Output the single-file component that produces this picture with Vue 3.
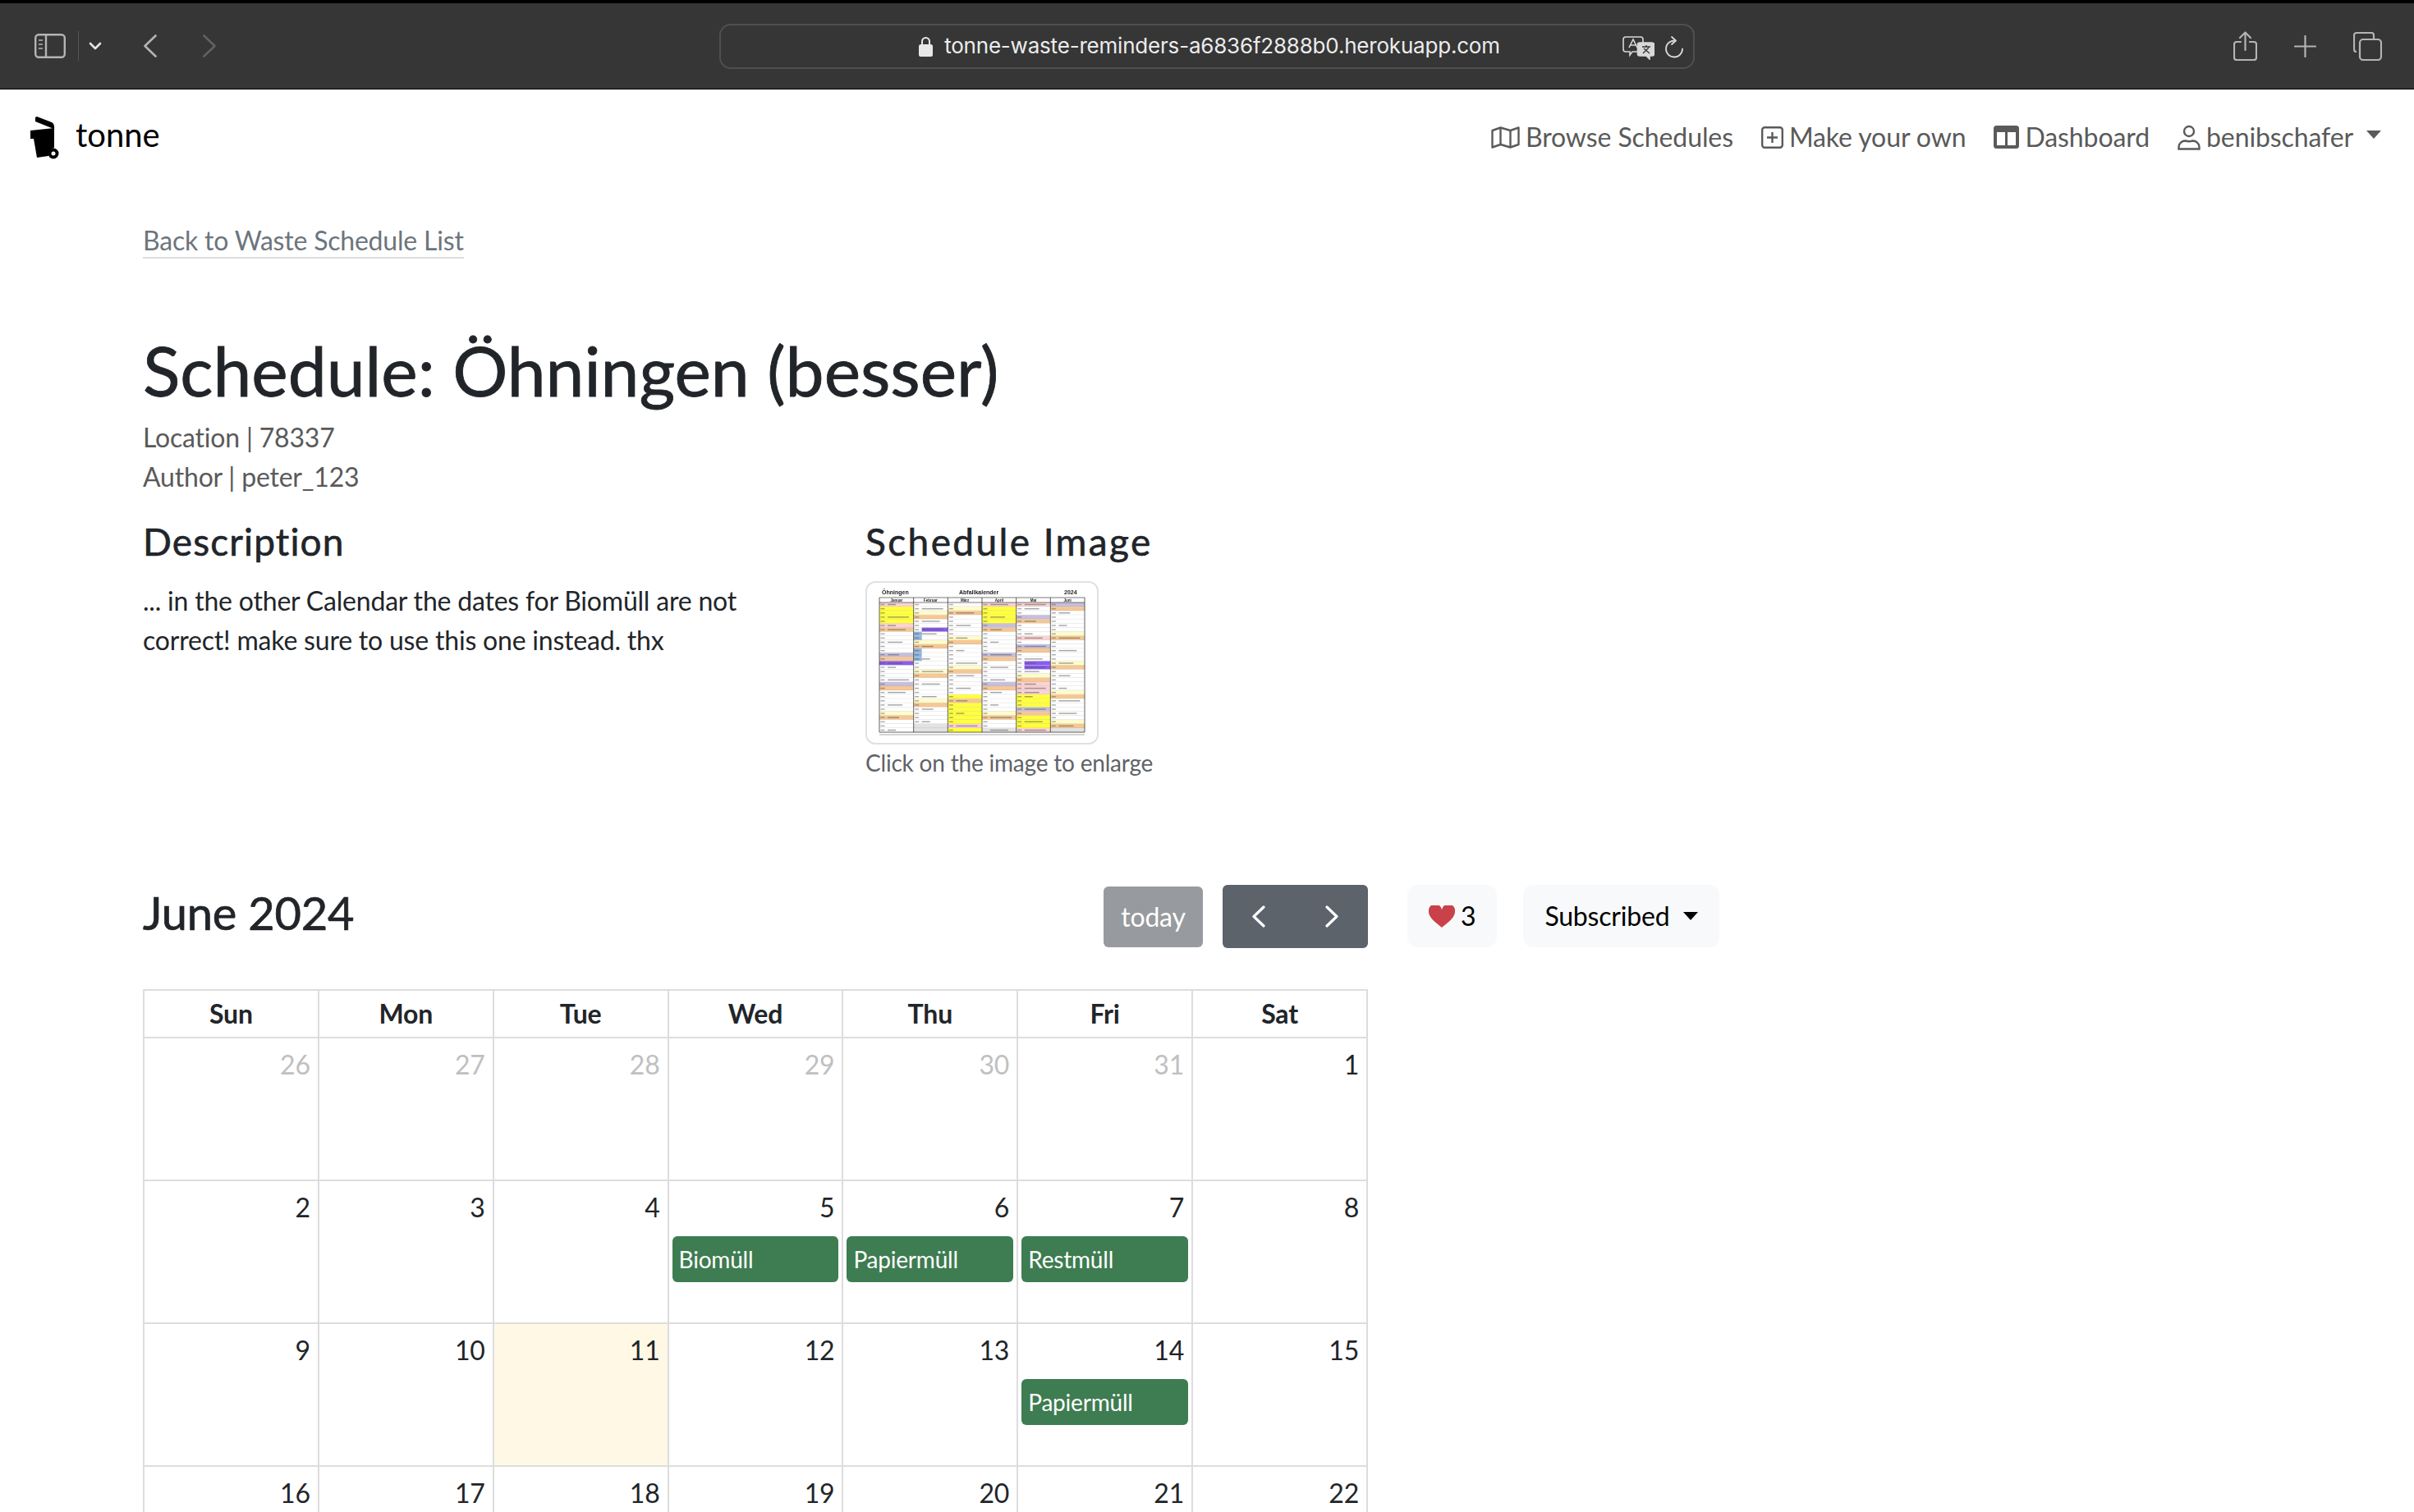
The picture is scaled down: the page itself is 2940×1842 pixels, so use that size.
<script setup>
const weekdays = ['Sun', 'Mon', 'Tue', 'Wed', 'Thu', 'Fri', 'Sat']

const weeks = [
  [26, 27, 28, 29, 30, 31, 1],
  [2, 3, 4, 5, 6, 7, 8],
  [9, 10, 11, 12, 13, 14, 15],
  [16, 17, 18, 19, 20, 21, 22]
]

const events = { 5: 'Biomüll', 6: 'Papiermüll', 7: 'Restmüll', 14: 'Papiermüll' }

function isMuted(weekIndex, day) {
  return weekIndex === 0 && day > 7
}

// thumbnail of the printed calendar, one letter per day
const palette = {
  r: '#fbd3d3', y: '#ffff3c', o: '#f6c794', l: '#fffccb', p: '#c6bfdc',
  v: '#8a5cf2', w: '#ffffff', g: '#e2e2e2', b: '#ffffff', h: '#ffffff'
}
const months = [
  { name: 'Januar', days: 'ryyyyrowwwwwpovwwwwpowwwwwloWWW' },
  { name: 'Februar', days: 'wwlowwhbblobbbwwlowwwwwlowwwwgg' },
  { name: 'März', days: 'wlowwwwwlowwwwwlowwwwwyoyyyyyryo' },
  { name: 'April', days: 'ryyyypowwwwwpowwwwwpowwwwwlowwg' },
  { name: 'Mai', days: 'rwwpowwwrwpowwhhwlorrryyypoyyyry' },
  { name: 'Juni', days: 'powwwwwlowwwwwlowwwwwlowwwwwlog' }
]
const rowH = 5.1
const colW = 41.67
const cells = []
months.forEach((month, m) => {
  month.days.toLowerCase().slice(0, 31).split('').forEach((kind, d) => {
    const mark = (d * 7 + m * 5) % 3 === 0 || kind === 'r' || kind === 'v' || kind === 'h'
    cells.push({
      key: m + '-' + d,
      kind,
      x: 15 + m * colW,
      y: 24 + d * rowH,
      mark: kind !== 'g',
      label: mark ? 10 + ((d * 3 + m) % 5) * 4 : 0
    })
  })
})
</script>

<template>
  <div class="page">
    <header class="browser-bar">
      <div class="browser-left">
        <svg class="ic-sidebar" width="38" height="30" viewBox="0 0 38 30" fill="none" stroke="#b4b4b4" stroke-width="2.4">
          <rect x="1.2" y="1.2" width="35.6" height="27.6" rx="4" />
          <path d="M14 1v28" />
          <path d="M5 8h5M5 13h5M5 18h5" stroke-width="1.6" />
        </svg>
        <span class="bar-divider"></span>
        <svg width="16" height="10" viewBox="0 0 16 10" fill="none" stroke="#e4e4e4" stroke-width="2.6" stroke-linecap="round" stroke-linejoin="round">
          <path d="M2 2l6 6 6-6" />
        </svg>
        <svg class="ic-back" width="16" height="28" viewBox="0 0 16 28" fill="none" stroke="#b4b4b4" stroke-width="2.6" stroke-linecap="round" stroke-linejoin="round">
          <path d="M14.5 1.5L1.5 14l13 12.5" />
        </svg>
        <svg class="ic-forward" width="16" height="28" viewBox="0 0 16 28" fill="none" stroke="#626262" stroke-width="2.6" stroke-linecap="round" stroke-linejoin="round">
          <path d="M1.5 1.5L14.5 14l-13 12.5" />
        </svg>
      </div>
      <div class="url-box">
        <svg class="ic-lock" width="17" height="25" viewBox="0 0 17 25">
          <path d="M4 11V6.5a4.5 4.5 0 0 1 9 0V11" fill="none" stroke="#e8e8e8" stroke-width="2" />
          <rect x="0" y="10" width="17" height="15" rx="2.5" fill="#e8e8e8" />
        </svg>
        <span class="url-text">tonne-waste-reminders-a6836f2888b0.herokuapp.com</span>
        <svg class="ic-translate" width="39" height="29" viewBox="0 0 39 29" fill="none" stroke="#d8d8d8" stroke-width="1.6">
          <path d="M4 1h18a3 3 0 0 1 3 3v12a3 3 0 0 1-3 3h-10l-3 4v-4H4a3 3 0 0 1-3-3V4a3 3 0 0 1 3-3z" />
          <path d="M8 14l5-10 5 10M10 11h6" />
          <path d="M21 8h15a2.5 2.5 0 0 1 2.5 2.5v11A2.5 2.5 0 0 1 36 24h-3v4l-4-4h-8a2.5 2.5 0 0 1-2.5-2.5v-11A2.5 2.5 0 0 1 21 8z" fill="#d8d8d8" />
          <path d="M24 13h10M29 11v2M25 21l7-7M26 15l7 6" stroke="#363636" stroke-width="1.4" />
        </svg>
        <svg class="ic-reload" width="23" height="27" viewBox="0 0 23 27" fill="none" stroke="#d8d8d8" stroke-width="1.8" stroke-linecap="round" stroke-linejoin="round">
          <path d="M11 5.5a10 10 0 1 0 10 10" />
          <path d="M8 1l5 4.5L8 10" />
        </svg>
      </div>
      <div class="browser-right">
        <svg width="29" height="36" viewBox="0 0 29 36" fill="none" stroke="#b4b4b4" stroke-width="2.2" stroke-linecap="round" stroke-linejoin="round">
          <path d="M9 13H4a3 3 0 0 0-3 3v16a3 3 0 0 0 3 3h21a3 3 0 0 0 3-3V16a3 3 0 0 0-3-3h-5" />
          <path d="M14.5 23V2M8 8l6.5-6.5L21 8" />
        </svg>
        <svg width="27" height="27" viewBox="0 0 27 27" stroke="#b4b4b4" stroke-width="2.2" stroke-linecap="round">
          <path d="M13.5 1v25M1 13.5h25" />
        </svg>
        <svg width="35" height="35" viewBox="0 0 35 35" fill="none" stroke="#b4b4b4" stroke-width="2.2">
          <path d="M4 24a3 3 0 0 1-3-3V4a3 3 0 0 1 3-3h18a3 3 0 0 1 3 3v5" />
          <rect x="8" y="9" width="26" height="25" rx="4" />
        </svg>
      </div>
    </header>

    <nav class="top-nav">
      <a class="brand">
        <svg class="brand-logo" width="60" height="60" viewBox="0 0 60 60">
          <path d="M13 4l2-1 18 7c3 1.500 3.500 5 3 10l-3-3L13 9z" fill="#000" />
          <path d="M7 20l29-3v24c-4 1-7 5-7 10l-14 2-4-23-4 0z" fill="#000" />
          <circle cx="35" cy="48" r="6.500" fill="#000" />
          <circle cx="35" cy="48" r="2.500" fill="#fff" />
        </svg>
        <span class="brand-name">tonne</span>
      </a>
      <div class="nav-links">
        <a class="nav-link">
          <svg width="35" height="27" viewBox="0 0 35 27" fill="none" stroke="#5a5a5a" stroke-width="2.4" stroke-linejoin="round">
            <path d="M1.500 5L11.500 1.500 23.500 5 33.500 1.500V22L23.500 25.500 11.500 22 1.500 25.500z" />
            <path d="M11.500 1.500V22M23.500 5V25.500" />
          </svg>
          Browse Schedules
        </a>
        <a class="nav-link">
          <svg width="27" height="27" viewBox="0 0 27 27" fill="none" stroke="#5a5a5a" stroke-width="2.4">
            <rect x="1.200" y="1.200" width="24.600" height="24.600" rx="3" />
            <path d="M13.500 7v13M7 13.500h13" />
          </svg>
          Make your own
        </a>
        <a class="nav-link">
          <svg width="31" height="28" viewBox="0 0 31 28">
            <rect width="31" height="28" rx="3.500" fill="#5a5a5a" />
            <rect x="4" y="8" width="10" height="16" fill="#fff" />
            <rect x="17" y="8" width="10" height="16" fill="#fff" />
          </svg>
          Dashboard
        </a>
        <a class="nav-link user-link">
          <svg width="28" height="31" viewBox="0 0 28 31" fill="none" stroke="#5a5a5a" stroke-width="2.400">
            <circle cx="14" cy="8" r="6" />
            <path d="M1.500 29.500v-2c0-5 4-8 8-8 3 1 6 1 9 0 4 0 8 3 8 8v2z" />
          </svg>
          benibschafer
          <span class="caret nav-caret"></span>
        </a>
      </div>
    </nav>

    <main class="content">
      <a class="back-link">Back to Waste Schedule List</a>

      <h1 class="title">Schedule: Öhningen (besser)</h1>
      <p class="meta">Location | 78337</p>
      <p class="meta">Author | peter_123</p>

      <section class="info-row">
        <div class="info-col">
          <h3 class="heading-desc">Description</h3>
          <p class="description">... in the other Calendar the dates for Biomüll are not correct! make sure to use this one instead. thx</p>
        </div>
        <div class="info-col">
          <h3 class="heading-image">Schedule Image</h3>
          <div class="thumb">
            <svg width="280" height="195" viewBox="0 0 280 195">
              <defs>
                <filter id="soft"><feGaussianBlur stdDeviation="0.4" /></filter>
              </defs>
              <g filter="url(#soft)">
                <g v-for="cell in cells" :key="cell.key">
                  <rect :x="cell.x" :y="cell.y" :width="colW" :height="rowH" :fill="palette[cell.kind]" />
                  <rect v-if="cell.kind === 'b'" :x="cell.x" :y="cell.y" width="10" :height="rowH" fill="#8fb4de" />
                  <rect v-if="cell.kind === 'h'" :x="cell.x + 10" :y="cell.y" :width="colW - 10" :height="rowH" fill="#8a5cf2" />
                  <rect v-if="cell.mark" :x="cell.x + 1.500" :y="cell.y + 1.800" width="5" height="1.400" fill="#555" opacity="0.5" />
                  <rect v-if="cell.label" :x="cell.x + 10" :y="cell.y + 1.800" :width="cell.label" height="1.400" fill="#555" opacity="0.55" />
                  <path :d="`M${cell.x} ${cell.y + rowH}h${colW}`" stroke="#888" stroke-width="0.3" />
                </g>
                <path v-for="i in 7" :key="i" :d="`M${15 + (i - 1) * colW} 18V182`" stroke="#222" stroke-width="0.7" />
                <path d="M15 18H265M15 24H265M15 182H265" stroke="#222" stroke-width="0.6" />
                <path d="M15 185H265" stroke="#aaa" stroke-width="1.200" />
                <text x="18" y="14" class="thumb-head">Öhningen</text>
                <text x="112" y="14" class="thumb-head">Abfallkalender</text>
                <text x="240" y="14" class="thumb-head">2024</text>
                <text v-for="(month, i) in months" :key="month.name" :x="15 + (i + 0.5) * colW" y="23" text-anchor="middle" class="thumb-month">{{ month.name }}</text>
              </g>
            </svg>
          </div>
          <p class="thumb-caption">Click on the image to enlarge</p>
        </div>
      </section>

      <section class="calendar-row">
        <div class="calendar">
          <div class="cal-toolbar">
            <h2>June 2024</h2>
            <div class="cal-buttons">
              <button class="btn-today">today</button>
              <div class="btn-group">
                <button class="btn-arrow">
                  <svg width="16" height="27" viewBox="0 0 16 27" fill="none" stroke="#fff" stroke-width="3.200" stroke-linecap="round" stroke-linejoin="round">
                    <path d="M14 2L2 13.500 14 25" />
                  </svg>
                </button>
                <button class="btn-arrow">
                  <svg width="16" height="27" viewBox="0 0 16 27" fill="none" stroke="#fff" stroke-width="3.200" stroke-linecap="round" stroke-linejoin="round">
                    <path d="M2 2l12 11.500L2 25" />
                  </svg>
                </button>
              </div>
            </div>
          </div>
          <table class="cal-table">
            <thead>
              <tr>
                <th v-for="day in weekdays" :key="day">{{ day }}</th>
              </tr>
            </thead>
            <tbody>
              <tr v-for="(week, w) in weeks" :key="w">
                <td v-for="day in week" :key="day" :class="{ today: w === 2 && day === 11 }">
                  <div class="day-num" :class="{ muted: isMuted(w, day) }">{{ day }}</div>
                  <div v-if="events[day] && !isMuted(w, day)" class="event">{{ events[day] }}</div>
                </td>
              </tr>
            </tbody>
          </table>
        </div>
        <div class="cal-actions">
          <button class="btn-light">
            <svg width="32" height="27" viewBox="0 0 32 27">
              <path d="M16 27C9 21 0 15 0 8a8 8 0 0 1 16-3 8 8 0 0 1 16 3c0 7-9 13-16 19z" fill="#c9424a" />
            </svg>
            3
          </button>
          <button class="btn-light btn-sub">Subscribed <span class="caret"></span></button>
        </div>
      </section>
    </main>
  </div>
</template>

<style>
html, body {
  margin: 0;
  background: #fff;
}
</style>

<style scoped>
.page {
  width: 2940px;
  height: 1842px;
  overflow: hidden;
  font-family: "Lato", "Liberation Sans", sans-serif;
  font-size: 32px;
  line-height: 48px;
  letter-spacing: -0.2px;
  color: #212529;
}

.browser-bar {
  display: grid;
  grid-template-columns: 876px 1188px 1fr;
  align-items: center;
  height: 109px;
  box-sizing: border-box;
  background: #363636;
  border-top: 4px solid #000;
  border-bottom: 1px solid #000;
}
.browser-left {
  display: flex;
  align-items: center;
  padding-left: 42px;
}
.bar-divider {
  width: 1px;
  height: 36px;
  margin: 0 12px 0 15px;
  background: #555;
}
.ic-back { margin-left: 51px; }
.ic-forward { margin-left: 56px; }
.url-box {
  position: relative;
  display: flex;
  align-items: center;
  justify-content: center;
  gap: 14px;
  height: 55px;
  box-sizing: border-box;
  border: 2px solid #4f4f4f;
  border-radius: 14px;
  padding-left: 6px;
}
.url-text {
  font-family: "Inter", "Liberation Sans", sans-serif;
  font-size: 26px;
  line-height: 30px;
  letter-spacing: -0.2px;
  color: #ececec;
}
.ic-translate {
  position: absolute;
  right: 47px;
  top: 13px;
}
.ic-reload {
  position: absolute;
  right: 11px;
  top: 13px;
}
.browser-right {
  display: flex;
  align-items: center;
  gap: 45px;
  padding-left: 656px;
}

.top-nav {
  display: flex;
  align-items: center;
  justify-content: space-between;
  height: 116px;
  padding: 0 40px 0 30px;
}
.brand {
  display: flex;
  align-items: center;
  gap: 2px;
  font-size: 40px;
  letter-spacing: 0;
  color: #000;
}
.brand-logo {
  margin-top: 4px;
}
.brand-name {
  margin-bottom: 6px;
}
.nav-links {
  display: flex;
  align-items: center;
  gap: 34px;
  letter-spacing: -0.1px;
}
.nav-link {
  display: flex;
  align-items: center;
  gap: 7px;
  color: #5a5a5a;
}
.caret {
  display: inline-block;
  width: 0;
  height: 0;
  margin-left: 12px;
  vertical-align: 5px;
  border-top: 10px solid currentColor;
  border-left: 9px solid transparent;
  border-right: 9px solid transparent;
}
.nav-caret {
  margin-left: 9px;
  margin-bottom: 6px;
}

.content {
  padding: 44px 0 0 174px;
}
.back-link {
  color: #6c757d;
  padding-bottom: 1px;
  border-bottom: 2px solid #ddd;
}
.title {
  margin: 83px 0 8px;
  font-size: 84px;
  line-height: 101px;
  font-weight: 400;
  letter-spacing: 0;
  -webkit-text-stroke: 0.8px #212529;
}
.meta {
  margin: 0;
  color: #5a5a5a;
}
.info-row {
  display: grid;
  grid-template-columns: 880px 1fr;
  margin-top: 27px;
}
.info-col h3 {
  margin: 0 0 21px;
  font-size: 46px;
  line-height: 55px;
  font-weight: 400;
  -webkit-text-stroke: 0.6px #212529;
}
.heading-desc {
  letter-spacing: 1.1px;
}
.heading-image {
  letter-spacing: 2.4px;
}
.description {
  margin: 0;
  width: 780px;
}
.thumb {
  display: block;
  width: 284px;
  height: 199px;
  box-sizing: border-box;
  border: 2px solid #dee2e6;
  border-radius: 12px;
  background: #fff;
  overflow: hidden;
}
.thumb svg {
  display: block;
}
.thumb-head {
  font-family: "Liberation Sans", sans-serif;
  font-size: 7px;
  font-weight: 700;
  letter-spacing: 0;
  fill: #222;
}
.thumb-month {
  font-family: "Liberation Sans", sans-serif;
  font-size: 4.500px;
  font-weight: 700;
  letter-spacing: 0;
  fill: #222;
}
.thumb-caption {
  margin: 0;
  font-size: 28px;
  line-height: 44px;
  color: #5f6368;
}

.calendar-row {
  display: flex;
  align-items: flex-start;
  margin-top: 127px;
}
.calendar {
  width: 1492px;
}
.cal-toolbar {
  display: flex;
  align-items: flex-start;
  justify-content: space-between;
  margin-bottom: 50px;
}
.cal-toolbar h2 {
  margin: 0;
  font-size: 56px;
  line-height: 67px;
  font-weight: 400;
  letter-spacing: -0.2px;
  -webkit-text-stroke: 0.7px #212529;
}
.cal-buttons {
  display: flex;
  align-items: center;
  gap: 24px;
}
button {
  font: inherit;
  letter-spacing: inherit;
  border: 0;
  cursor: pointer;
}
.btn-today {
  width: 121px;
  height: 74px;
  border-radius: 6px;
  padding: 0;
  background: #979a9e;
  color: #fff;
}
.btn-group {
  display: flex;
  border-radius: 6px;
  overflow: hidden;
}
.btn-arrow {
  display: flex;
  align-items: center;
  justify-content: center;
  width: 88.500px;
  height: 77px;
  padding: 0;
  background: #5c636a;
}
.cal-table {
  width: 1492px;
  border-collapse: collapse;
  table-layout: fixed;
}
.cal-table th,
.cal-table td {
  border: 2px solid #ddd;
  padding: 0;
}
.cal-table th {
  height: 56px;
  font-weight: 700;
  line-height: 40px;
}
.cal-table td {
  height: 172px;
  vertical-align: top;
  box-sizing: content-box;
}
.cal-table td.today {
  background: #fff8e5;
}
.day-num {
  padding: 12px 9px 0 0;
  line-height: 40px;
  text-align: right;
}
.day-num.muted {
  color: #bfc0c1;
}
.event {
  margin: 15px 4px 0;
  height: 56px;
  padding-left: 8px;
  border-radius: 6px;
  background: #3e7c51;
  color: #fff;
  font-size: 28px;
  line-height: 56px;
}
.cal-actions {
  display: flex;
  gap: 32px;
  margin-left: 48px;
}
.btn-light {
  display: flex;
  align-items: center;
  height: 76px;
  padding: 0 26px;
  border-radius: 12px;
  background: #f8f9fa;
  color: #000;
  white-space: nowrap;
}
.btn-sub .caret {
  margin-left: 17px;
}
.btn-light svg {
  margin-right: 7px;
}
</style>
